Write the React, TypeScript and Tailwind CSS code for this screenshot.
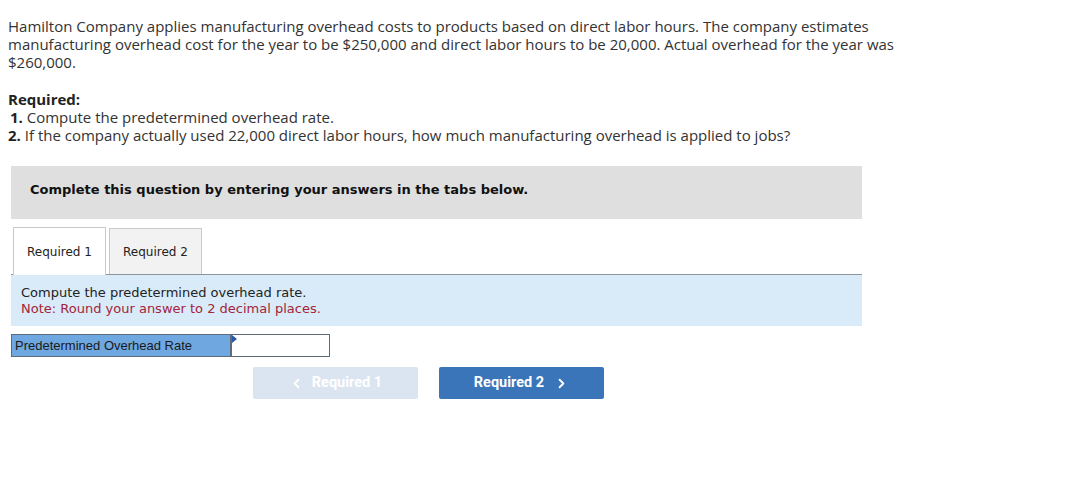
import { ChevronLeft, ChevronRight } from 'lucide-react';

export default function App() {
  return (
    <main className="min-h-screen w-[1083px] bg-white">
      {/* Question text */}
      <div className="pl-[8px] pt-[17px] text-[15px] leading-[18px] text-[#333] font-['Open_Sans',sans-serif]">
        <p>
          <span className="block">Hamilton Company applies manufacturing overhead costs to products based on direct labor hours. The company estimates</span>
          <span className="block">manufacturing overhead cost for the year to be $250,000 and direct labor hours to be 20,000. Actual overhead for the year was</span>
          <span className="block">$260,000.</span>
        </p>
        <p className="mt-[19px] font-bold text-[#222]">Required:</p>
        <p><b className="pl-[2px] text-[#222]">1.</b> Compute the predetermined overhead rate.</p>
        <p><b className="text-[#222]">2.</b> If the company actually used 22,000 direct labor hours, how much manufacturing overhead is applied to jobs?</p>
      </div>

      {/* Instruction box */}
      <div className="ml-[11px] mt-[22px] w-[851px] h-[53px] bg-[#dfdfdf] pl-[19px] pt-[14px] font-['DejaVu_Sans',sans-serif] text-[13px] font-bold text-[#111]">
        Complete this question by entering your answers in the tabs below.
      </div>

      {/* Tabs */}
      <div className="ml-[11px] mt-[8px] w-[851px] flex items-end gap-[3px] pl-[2px] border-b border-[#8a959e] h-[48px] font-['DejaVu_Sans',sans-serif] text-[12px] text-[#222]">
        <div className="relative top-[1px] h-[48px] w-[93px] bg-white border border-b-0 border-[#c9c9c9] flex items-center justify-center">
          Required 1
        </div>
        <div className="h-[46px] w-[93px] bg-[#f2f2f2] border border-b-0 border-[#c9c9c9] flex items-center justify-center">
          Required 2
        </div>
      </div>

      {/* Tab content */}
      <div className="ml-[11px] w-[851px] h-[51px] bg-[#d9ebf8] pl-[10px] pt-[10px] font-['DejaVu_Sans',sans-serif] text-[13px] leading-[16px]">
        <p className="text-[#222]">Compute the predetermined overhead rate.</p>
        <p className="text-[#a3243b]">Note: Round your answer to 2 decimal places.</p>
      </div>

      <div className="ml-[11px] mt-[8px] flex h-[23px] w-[319px] border border-[#5f6b78]">
        <div className="w-[218px] bg-[#6fa8e0] pl-[3px] flex items-center font-['Liberation_Sans',sans-serif] text-[13px] text-[#1a1a1a]">
          Predetermined Overhead Rate
        </div>
        <div className="relative flex-1 bg-white border-l-2 border-[#5f6b78]">
          <span className="absolute left-0 top-0 w-0 h-0 border-t-[4px] border-b-[4px] border-l-[5px] border-t-transparent border-b-transparent border-l-[#2c5aa0]" />
        </div>
      </div>

      {/* Navigation buttons */}
      <div className="ml-[253px] mt-[10px] flex gap-[21px] font-['Roboto',sans-serif] text-[14.5px] font-bold">
        <button className="h-[32px] w-[165px] rounded-[2px] bg-[#dbe5f1] text-white flex items-center justify-center gap-[8px]">
          <ChevronLeft className="w-[15px] h-[15px]" strokeWidth={3} />
          Required 1
        </button>
        <button className="h-[32px] w-[165px] rounded-[2px] bg-[#3a74b9] text-white flex items-center justify-center gap-[10px]">
          Required 2
          <ChevronRight className="w-[15px] h-[15px]" strokeWidth={3} />
        </button>
      </div>
    </main>
  );
}
